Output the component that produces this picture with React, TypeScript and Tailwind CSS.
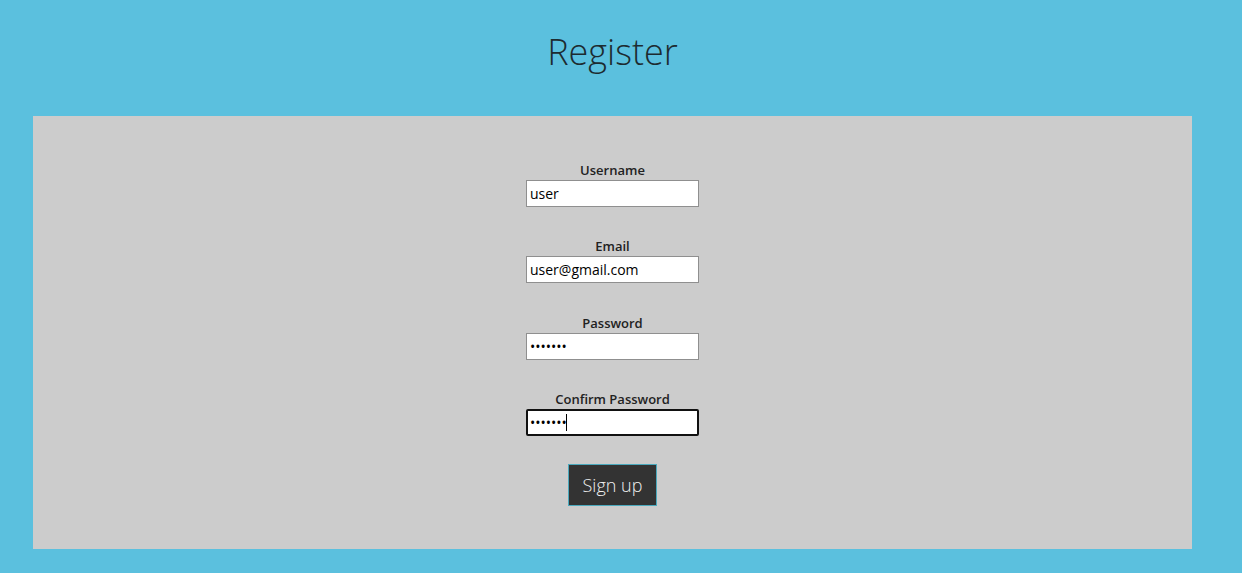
const fields = [
  { label: "Username", type: "text", value: "user" },
  { label: "Email", type: "text", value: "user@gmail.com" },
  { label: "Password", type: "password", value: "1234567" },
];

export default function App() {
  return (
    <div className="min-h-[573px] bg-[#5bc0de] pb-6 font-['Open_Sans',sans-serif]">
      <div className="w-[1225px]">
        <h1 className="pt-[28px] pb-[40px] text-center text-[36px] leading-[48px] font-light text-[#1d2b30]">
          Register
        </h1>
        <div className="mx-[33px] bg-[#cccccc] pt-[45px] pb-[43px]">
          <form className="flex flex-col items-center">
            {fields.map((f, i) => (
              <div
                key={f.label}
                className={`flex flex-col items-center ${i === 1 ? "mb-[31px]" : "mb-[30px]"}`}
              >
                <label className="text-[13px] leading-[19px] font-semibold text-[#222]">
                  {f.label}
                </label>
                <input
                  type={f.type}
                  defaultValue={f.value}
                  readOnly
                  className="h-[27px] w-[173px] border border-[#8f8f8f] bg-white px-[3px] text-[14px] text-black outline-none"
                />
              </div>
            ))}
            <div className="mb-[28px] flex flex-col items-center">
              <label className="text-[13px] leading-[19px] font-semibold text-[#222]">
                Confirm Password
              </label>
              <div className="relative">
                <input
                  type="password"
                  defaultValue="1234567"
                  readOnly
                  className="h-[27px] w-[173px] rounded-[2px] border-2 border-[#111] bg-white px-[2px] text-[14px] text-black outline-none"
                />
                <span className="absolute top-[5px] left-[40px] h-[17px] w-px bg-black" />
              </div>
            </div>
            <button
              type="button"
              className="h-[42px] w-[89px] border border-[#4aa9bd] bg-[#333333] text-[18px] font-light text-[#f0f0f0]"
            >
              Sign up
            </button>
          </form>
        </div>
      </div>
    </div>
  );
}
